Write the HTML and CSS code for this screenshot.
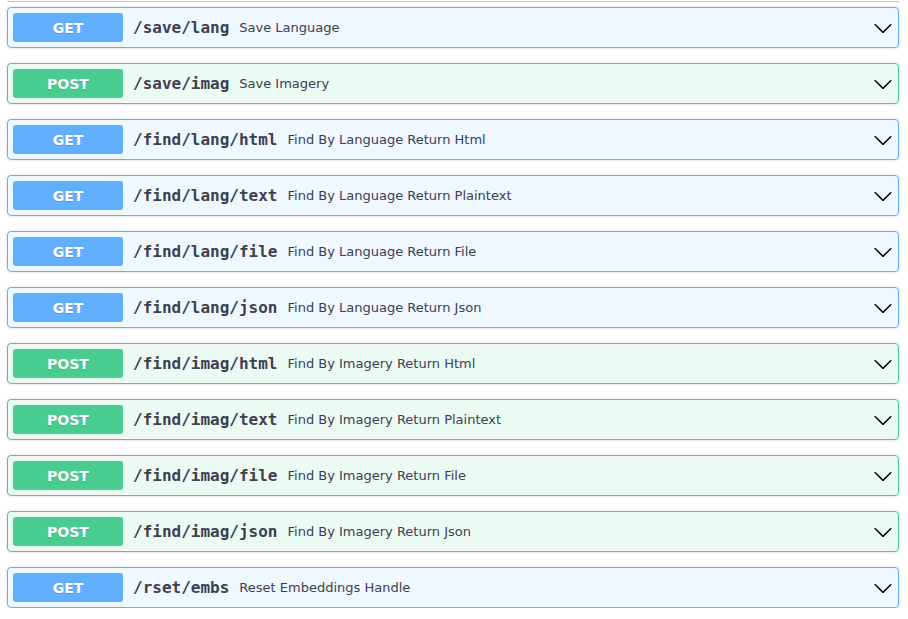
FILE: index.html
```html
<!DOCTYPE html>
<html>
<head>
<meta charset="utf-8">
<link rel="stylesheet" href="styles.css">
</head>
<body>
<div class="wrap">
  <div class="tag-rule"></div>
  <div class="ops">
    <div class="op op-get"><span class="method">GET</span><span class="path">/save/lang</span><span class="desc">Save Language</span><svg class="arrow" viewBox="0 0 20 20" width="20" height="20"><path d="M17.418 6.109c.272-.268.709-.268.979 0s.271.701 0 .969l-7.908 7.83c-.27.268-.707.268-.979 0l-7.908-7.83c-.27-.268-.27-.701 0-.969.271-.268.709-.268.979 0L10 13.25l7.418-7.141z"/></svg></div>
    <div class="op op-post"><span class="method">POST</span><span class="path">/save/imag</span><span class="desc">Save Imagery</span><svg class="arrow" viewBox="0 0 20 20" width="20" height="20"><path d="M17.418 6.109c.272-.268.709-.268.979 0s.271.701 0 .969l-7.908 7.83c-.27.268-.707.268-.979 0l-7.908-7.83c-.27-.268-.27-.701 0-.969.271-.268.709-.268.979 0L10 13.25l7.418-7.141z"/></svg></div>
    <div class="op op-get"><span class="method">GET</span><span class="path">/find/lang/html</span><span class="desc">Find By Language Return Html</span><svg class="arrow" viewBox="0 0 20 20" width="20" height="20"><path d="M17.418 6.109c.272-.268.709-.268.979 0s.271.701 0 .969l-7.908 7.83c-.27.268-.707.268-.979 0l-7.908-7.830c-.27-.268-.27-.701 0-.969.271-.268.709-.268.979 0L10 13.25l7.418-7.141z"/></svg></div>
    <div class="op op-get"><span class="method">GET</span><span class="path">/find/lang/text</span><span class="desc">Find By Language Return Plaintext</span><svg class="arrow" viewBox="0 0 20 20" width="20" height="20"><path d="M17.418 6.109c.272-.268.709-.268.979 0s.271.701 0 .969l-7.908 7.83c-.27.268-.707.268-.979 0l-7.908-7.83c-.27-.268-.27-.701 0-.969.271-.268.709-.268.979 0L10 13.25l7.418-7.141z"/></svg></div>
    <div class="op op-get"><span class="method">GET</span><span class="path">/find/lang/file</span><span class="desc">Find By Language Return File</span><svg class="arrow" viewBox="0 0 20 20" width="20" height="20"><path d="M17.418 6.109c.272-.268.709-.268.979 0s.271.701 0 .969l-7.908 7.83c-.27.268-.707.268-.979 0l-7.908-7.83c-.27-.268-.27-.701 0-.969.271-.268.709-.268.979 0L10 13.25l7.418-7.141z"/></svg></div>
    <div class="op op-get"><span class="method">GET</span><span class="path">/find/lang/json</span><span class="desc">Find By Language Return Json</span><svg class="arrow" viewBox="0 0 20 20" width="20" height="20"><path d="M17.418 6.109c.272-.268.709-.268.979 0s.271.701 0 .969l-7.908 7.83c-.27.268-.707.268-.979 0l-7.908-7.83c-.27-.268-.27-.701 0-.969.271-.268.709-.268.979 0L10 13.25l7.418-7.141z"/></svg></div>
    <div class="op op-post"><span class="method">POST</span><span class="path">/find/imag/html</span><span class="desc">Find By Imagery Return Html</span><svg class="arrow" viewBox="0 0 20 20" width="20" height="20"><path d="M17.418 6.109c.272-.268.709-.268.979 0s.271.701 0 .969l-7.908 7.83c-.27.268-.707.268-.979 0l-7.908-7.83c-.27-.268-.27-.701 0-.969.271-.268.709-.268.979 0L10 13.25l7.418-7.141z"/></svg></div>
    <div class="op op-post"><span class="method">POST</span><span class="path">/find/imag/text</span><span class="desc">Find By Imagery Return Plaintext</span><svg class="arrow" viewBox="0 0 20 20" width="20" height="20"><path d="M17.418 6.109c.272-.268.709-.268.979 0s.271.701 0 .969l-7.908 7.83c-.27.268-.707.268-.979 0l-7.908-7.83c-.27-.268-.27-.701 0-.969.271-.268.709-.268.979 0L10 13.25l7.418-7.141z"/></svg></div>
    <div class="op op-post"><span class="method">POST</span><span class="path">/find/imag/file</span><span class="desc">Find By Imagery Return File</span><svg class="arrow" viewBox="0 0 20 20" width="20" height="20"><path d="M17.418 6.109c.272-.268.709-.268.979 0s.271.701 0 .969l-7.908 7.83c-.27.268-.707.268-.979 0l-7.908-7.83c-.27-.268-.27-.701 0-.969.271-.268.709-.268.979 0L10 13.25l7.418-7.141z"/></svg></div>
    <div class="op op-post"><span class="method">POST</span><span class="path">/find/imag/json</span><span class="desc">Find By Imagery Return Json</span><svg class="arrow" viewBox="0 0 20 20" width="20" height="20"><path d="M17.418 6.109c.272-.268.709-.268.979 0s.271.701 0 .969l-7.908 7.83c-.27.268-.707.268-.979 0l-7.908-7.83c-.27-.268-.27-.701 0-.969.271-.268.709-.268.979 0L10 13.25l7.418-7.141z"/></svg></div>
    <div class="op op-get"><span class="method">GET</span><span class="path">/rset/embs</span><span class="desc">Reset Embeddings Handle</span><svg class="arrow" viewBox="0 0 20 20" width="20" height="20"><path d="M17.418 6.109c.272-.268.709-.268.979 0s.271.701 0 .969l-7.908 7.83c-.27.268-.707.268-.979 0l-7.908-7.83c-.27-.268-.27-.701 0-.969.271-.268.709-.268.979 0L10 13.25l7.418-7.141z"/></svg></div>
  </div>
</div>
</body>
</html>
```

FILE: styles.css
```css
html, body {
  margin: 0;
  padding: 0;
  background: #ffffff;
  font-family: "DejaVu Sans", sans-serif;
  color: #3b4151;
}

.wrap {
  padding: 0 9px 0 7px;
}

.tag-rule {
  height: 1px;
  border-bottom: 1px solid rgba(59, 65, 81, 0.3);
  margin-bottom: 5px;
}

.ops {
  display: flex;
  flex-direction: column;
  gap: 15px;
}

.op {
  display: flex;
  align-items: center;
  padding: 5px;
  border: 1px solid;
  border-radius: 4px;
  box-shadow: 0 0 3px rgba(0, 0, 0, 0.19);
}

.op-get {
  background: rgba(97, 175, 254, 0.1);
  border-color: #61affe;
}

.op-post {
  background: rgba(73, 204, 144, 0.1);
  border-color: #49cc90;
}

.method {
  width: 110px;
  height: 29px;
  display: flex;
  align-items: center;
  justify-content: center;
  border-radius: 3px;
  color: #ffffff;
  font-family: "DejaVu Sans", sans-serif;
  font-weight: 700;
  font-size: 14px;
  text-shadow: 0 1px 0 rgba(0, 0, 0, 0.1);
  flex-shrink: 0;
}

.op-get .method { background: #61affe; }
.op-post .method { background: #49cc90; }

.path {
  padding: 0 10px;
  font-family: "DejaVu Sans Mono", monospace;
  font-weight: 600;
  font-size: 16px;
  color: #3b4151;
}

.desc {
  flex: 1;
  font-size: 13px;
  color: #3b4151;
}

.arrow {
  width: 20px;
  height: 20px;
  fill: #000000;
  flex-shrink: 0;
}
```
